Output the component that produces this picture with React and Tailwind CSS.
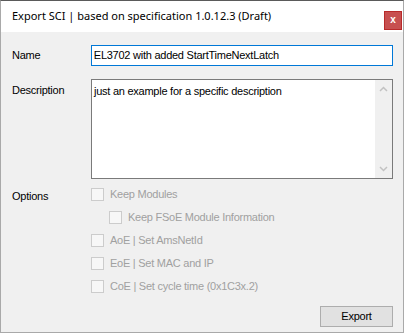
import React from "react";

const options = [
  { label: "Keep Modules", indent: false },
  { label: "Keep FSoE Module Information", indent: true },
  { label: "AoE | Set AmsNetId", indent: false },
  { label: "EoE | Set MAC and IP", indent: false },
  { label: "CoE | Set cycle time (0x1C3x.2)", indent: false },
];

const Checkbox = ({ label, indent }) => (
  <div className={`flex items-center h-[23px] ${indent ? "pl-[18px]" : ""}`}>
    <span className="w-[13px] h-[13px] border border-[#cccccc] bg-[#f7f7f7] shrink-0" />
    <span className="ml-[6px] text-[#a0a0a0]">{label}</span>
  </div>
);

export default function App() {
  return (
    <div
      className="w-[404px] h-[333px] flex flex-col border-t border-t-[#5a5a5a] border-x border-b border-[#a9a9a9] bg-[#f0f0f0] text-[11px] tracking-[-0.25px] text-black"
      style={{ fontFamily: '"Liberation Sans", Arial, sans-serif' }}
    >
      {/* Title bar */}
      <div className="h-[31px] bg-white flex items-center justify-between pl-[11px] pr-[1px] shrink-0">
        <span
          className="text-[11px] tracking-normal text-black"
          style={{ fontFamily: '"Noto Sans", "Open Sans", sans-serif' }}
        >
          Export SCI | based on specification 1.0.12.3 (Draft)
        </span>
        <button className="w-[18px] h-[19px] mt-[7px] bg-[#c75050] border border-[#b82a2a] flex items-center justify-center text-white font-bold text-[10px] leading-none">
          x
        </button>
      </div>

      {/* Body */}
      <div className="flex-1 flex flex-col pt-[13px] pl-[11px] pr-[10px]">
        <div className="flex items-center">
          <span className="w-[79px]">Name</span>
          <div className="w-[303px] h-[21px] border border-[#0078d7] bg-white flex items-center px-[2px]">
            EL3702 with added StartTimeNextLatch
          </div>
        </div>

        <div className="flex mt-[13px]">
          <span className="w-[79px] pt-[3px]">Description</span>
          <div className="w-[302px] h-[100px] border border-[#7a7a7a] bg-white flex">
            <div className="flex-1 px-[2px] pt-[3px]">
              just an example for a specific description
            </div>
            <div className="w-[17px] bg-[#f0f0f0] flex flex-col items-center justify-between py-[6px] text-[#c2c2c2]">
              <svg width="9" height="6" viewBox="0 0 9 6">
                <path d="M1 5 L4.5 1.5 L8 5" fill="none" stroke="currentColor" strokeWidth="1.5" />
              </svg>
              <svg width="9" height="6" viewBox="0 0 9 6">
                <path d="M1 1 L4.5 4.5 L8 1" fill="none" stroke="currentColor" strokeWidth="1.5" />
              </svg>
            </div>
          </div>
        </div>

        <div className="flex mt-[4px]">
          <span className="w-[79px] pt-[5px]">Options</span>
          <div className="flex flex-col">
            {options.map((o) => (
              <Checkbox key={o.label} label={o.label} indent={o.indent} />
            ))}
          </div>
        </div>

        <div className="flex justify-end mt-[8px]">
          <button className="w-[73px] h-[21px] bg-[#e1e1e1] border border-[#adadad] text-black">
            Export
          </button>
        </div>
      </div>
    </div>
  );
}
